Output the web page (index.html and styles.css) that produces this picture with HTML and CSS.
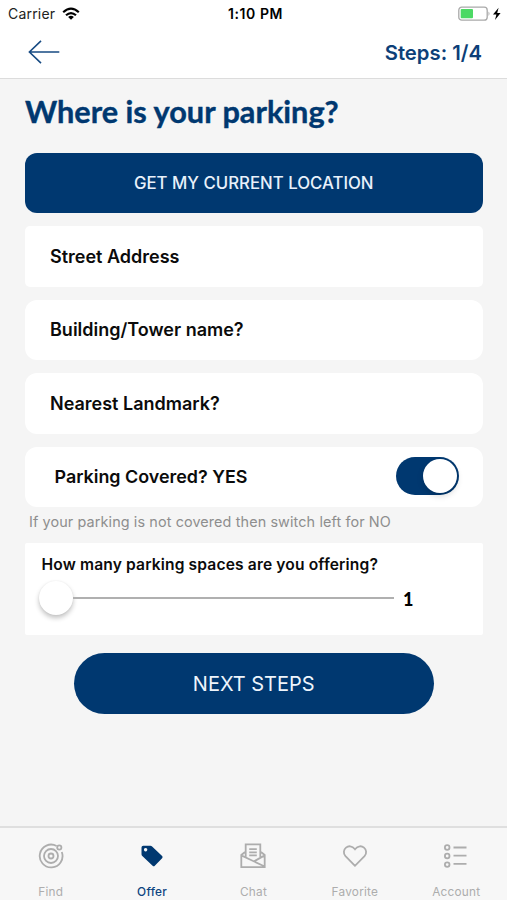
FILE: index.html
```html
<!DOCTYPE html>
<html lang="en">
<head>
<meta charset="utf-8">
<title>Offer parking</title>
<link rel="stylesheet" href="styles.css">
</head>
<body>
<div class="screen">
  <div class="status">
    <div class="carrier"><span class="carrier-name">Carrier</span>
      <svg class="wifi" width="18" height="14" viewBox="0 0 18 14" fill="none" stroke="#000" stroke-width="2.2"><path d="M1.2 5.2Q9-2 16.8 5.2M4 8.3Q9 3.8 14 8.3"/><path d="M9 12.8 6.1 9.9Q9 7.6 11.9 9.9Z" fill="#000" stroke="none"/></svg>
    </div>
    <span class="time">1:10 PM</span>
    <svg class="battery" width="45" height="16" viewBox="0 0 45 16"><rect x=".8" y="1.2" width="28.4" height="13" rx="3" fill="#fff" stroke="#a9a9a9" stroke-width="1.3"/><rect x="2.7" y="3" width="12.3" height="9.3" rx="1" fill="#4cd964"/><path d="M30.5 5.5q2 2.2 0 4.4z" fill="#a9a9a9"/><path d="M40.6 1.8 35 8.6h3.4l-1.4 5.3 5.6-7h-3.4z" fill="#000"/></svg>
  </div>
  <header class="header">
    <svg class="back" width="32" height="24" viewBox="0 0 32 24" fill="none" stroke="#174b83" stroke-width="1.6"><path d="M31.3 12H1.4M13 .8 1.4 12 13 23.2"/></svg>
    <span class="steps">Steps: 1/4</span>
  </header>
  <main class="content">
    <h1 class="title">Where is your parking?</h1>
    <button class="locate">GET MY CURRENT LOCATION</button>
    <div class="field square">Street Address</div>
    <div class="field">Building/Tower name?</div>
    <div class="field">Nearest Landmark?</div>
    <div class="field covered"><span>Parking Covered? YES</span><span class="switch"><i class="knob"></i></span></div>
    <p class="hint">If your parking is not covered then switch left for NO</p>
    <section class="spaces">
      <div class="question">How many parking spaces are you offering?</div>
      <div class="slider"><i class="thumb"></i><i class="track"></i><b class="count">1</b></div>
    </section>
    <button class="next">NEXT STEPS</button>
  </main>
  <nav class="tabs">
    <a class="tab"><svg viewBox="0 0 26 26"><path d="M18.6 3A11.4 11.4 0 1 0 23.8 9"/><circle cx="13" cy="13" r="7"/><circle cx="13" cy="13" r="2.5"/><circle cx="21.3" cy="4.5" r="2.1"/></svg><span>Find</span></a>
    <a class="tab active"><svg viewBox="0 0 26 26"><path class="solid" fill-rule="evenodd" d="M4.2 2.7h7.2q1 0 1.7.7l10 9.7q1.1 1.1 0 2.2l-7.3 7.4q-1.1 1-2.2 0L3.3 13q-.8-.8-.8-1.7V4.4q0-1.7 1.7-1.7ZM6.6 5a1.7 1.7 0 1 0 .01 0Z"/></svg><span>Offer</span></a>
    <a class="tab"><svg viewBox="0 0 26 26"><path d="M5.7 14.5V1.4h14.6v13.1M9.2 6.2h7.6M9.2 9.4h7.6M9.2 12.3h7.6M5.7 8.5 1.3 12v12.2h23.4V12l-4.4-3.5M1.3 12.4l23.4 11.1M14 18.4l10.7-6"/></svg><span>Chat</span></a>
    <a class="tab"><svg viewBox="0 0 26 26"><path d="M13 22.8 3.5 13.2C-1.8 7.2 7-1.3 13 6.2c6-7.5 14.8 1 9.5 7Z"/></svg><span>Favorite</span></a>
    <a class="tab"><svg viewBox="0 0 26 26"><circle cx="4.2" cy="4.5" r="2.3"/><circle cx="4.2" cy="13" r="2.3"/><circle cx="4.2" cy="21.6" r="2.3"/><path d="M10.5 4.5h13M10.5 12.7h13M10.5 20.9h13"/></svg><span>Account</span></a>
  </nav>
</div>
</body>
</html>
```
FILE: styles.css
```css
* { box-sizing: border-box; }
body { margin: 0; background: #f5f5f5; color: #0b0b0b; font-family: Inter, "Liberation Sans", sans-serif; }
.screen { height: 900px; display: flex; flex-direction: column; overflow: hidden; }
.status { height: 27px; background: #fff; display: grid; grid-template-columns: 1fr auto 1fr; align-items: center; padding: 0 4px 0 8px; font-size: 14px; }
.carrier { display: flex; align-items: center; gap: 7px; color: #222; letter-spacing: .2px; }
.time { font-weight: 600; color: #000; letter-spacing: .6px; }
.battery { justify-self: end; }
.header { height: 52px; background: #fff; border-bottom: 1.5px solid #dcdcdc; display: flex; justify-content: space-between; align-items: center; padding: 0 25px 1px 28px; }
.steps { font-size: 20.3px; font-weight: 600; color: #0d3f78; }
.content { flex: 1; padding: 0 24.5px 0 25px; }
.title { margin: 14px 0 0; height: 59.5px; font: 700 30.7px/37px Lato, sans-serif; color: #003870; -webkit-text-stroke: .4px #003870; white-space: nowrap; }
button { display: flex; align-items: center; justify-content: center; border: 0; background: #003870; color: #fff; font-family: inherit; }
.locate { width: 100%; height: 60.5px; border-radius: 12px; font-size: 16.8px; font-weight: 500; color: #e8f1fb; }
.field { margin-top: 13px; height: 60.5px; border-radius: 12px; background: #fff; display: flex; align-items: center; padding: 0 25px; font-size: 18px; font-weight: 600; }
.field.square { border-radius: 5px; }
.covered { justify-content: space-between; padding: 0 24px 1px 29.5px; font-size: 17.9px; }
.switch { width: 63px; height: 38px; border-radius: 19px; background: #003870; padding: 2px; display: flex; justify-content: flex-end; }
.knob { width: 34px; height: 34px; border-radius: 50%; background: #fff; box-shadow: 0 3px 6px rgba(0,0,0,.16); }
.hint { margin: 5px 0 0 4px; height: 31px; font-size: 14.4px; line-height: 19px; letter-spacing: .11px; color: #8e8e8e; white-space: nowrap; }
.spaces { height: 91.5px; border-radius: 2px; background: #fff; padding: 11.5px 16.5px 0; }
.question { font-size: 15.6px; line-height: 20px; font-weight: 600; letter-spacing: .14px; white-space: nowrap; }
.slider { display: flex; align-items: center; height: 34px; margin: 6px 0 0 -2.5px; }
.thumb { width: 34px; height: 34px; border-radius: 50%; background: #fff; box-shadow: 0 3px 5px rgba(0,0,0,.24), 0 0 2px rgba(0,0,0,.06); }
.track { width: 321px; height: 2px; background: #b0b0b0; }
.count { margin: 2px 0 0 9px; font: 900 18px Lato, sans-serif; color: #000; }
.next { width: 360px; height: 61px; margin: 18.5px auto 0; border-radius: 31px; font-size: 20px; color: #eef5fc; }
.tabs { height: 74px; border-top: 2px solid #dfdfdf; background: #f7f7f7; display: grid; grid-template-columns: repeat(5, 1fr); }
.tab { display: flex; flex-direction: column; align-items: center; color: #adadad; font-size: 11.8px; line-height: 16px; letter-spacing: .25px; }
.tab svg { width: 26px; height: 26px; margin: 14.5px 0 15.5px; fill: none; stroke: currentColor; stroke-width: 1.8; }
.tab.active { color: #0d4480; font-weight: 500; }
.tab .solid { fill: #003870; stroke: none; }
```
